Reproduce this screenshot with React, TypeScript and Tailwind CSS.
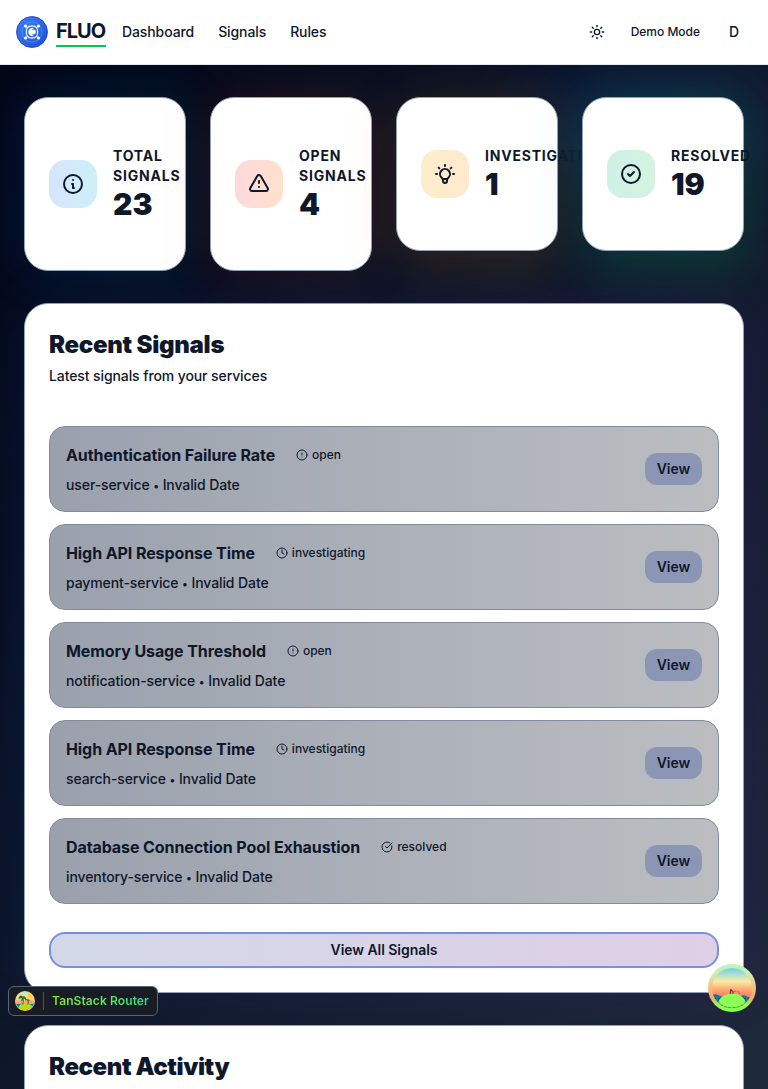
import React from "react";
import { CircleAlert, CircleCheckBig, Clock, Sun } from "lucide-react";

const stats = [
  {
    label: "Total Signals",
    value: 23,
    glow: "from-blue-600/15 to-cyan-600/15",
    tile: "from-[#d6e4ff] to-[#cdf0f7]",
    path: "M13 16h-1v-4h-1m1-4h.01M21 12a9 9 0 11-18 0 9 9 0 0118 0z",
  },
  {
    label: "Open Signals",
    value: 4,
    glow: "from-red-600/15 to-orange-600/15",
    tile: "from-[#fcd9dc] to-[#ffe1cd]",
    path: "M12 9v2m0 4h.01m-6.938 4h13.856c1.54 0 2.502-1.667 1.732-3L13.732 4c-.77-1.333-2.694-1.333-3.464 0L3.34 16c-.77 1.333.192 3 1.732 3z",
  },
  {
    label: "Investigating",
    value: 1,
    glow: "from-amber-600/15 to-yellow-600/15",
    tile: "from-[#fbeecb] to-[#ffe9cd]",
    path: "M9.663 17h4.673M12 3v1m6.364 1.636l-.707.707M21 12h-1M4 12H3m3.343-5.657l-.707-.707m2.828 9.9a5 5 0 117.072 0l-.548.547A3.374 3.374 0 0014 18.469V19a2 2 0 11-4 0v-.531c0-.895-.356-1.754-.988-2.386l-.548-.547z",
  },
  {
    label: "Resolved",
    value: 19,
    glow: "from-emerald-500/20 to-green-500/20",
    tile: "from-[#cff0e6] to-[#d3f4df]",
    path: "M9 12l2 2 4-4m6 2a9 9 0 11-18 0 9 9 0 0118 0z",
  },
];

const signals = [
  { name: "Authentication Failure Rate", service: "user-service", status: "open" },
  { name: "High API Response Time", service: "payment-service", status: "investigating" },
  { name: "Memory Usage Threshold", service: "notification-service", status: "open" },
  { name: "High API Response Time", service: "search-service", status: "investigating" },
  { name: "Database Connection Pool Exhaustion", service: "inventory-service", status: "resolved" },
];

const statusIcons = { open: CircleAlert, investigating: Clock, resolved: CircleCheckBig } as const;

function Logo() {
  return (
    <svg className="size-8" viewBox="0 0 32 32" fill="none">
      <defs>
        <linearGradient id="logo" x1="0" y1="0" x2="1" y2="1">
          <stop stopColor="#3b82f6" />
          <stop offset="1" stopColor="#1d4ed8" />
        </linearGradient>
      </defs>
      <circle cx="16" cy="16" r="15.5" fill="url(#logo)" stroke="#1e40af" strokeWidth=".8" />
      <circle cx="16" cy="16" r="10" stroke="#93c5fd" strokeWidth=".7" opacity=".5" />
      <circle cx="16" cy="16" r="5.8" stroke="#dbeafe" strokeWidth="1" opacity=".7" />
      <path d="M9.5 10 12 12M22.5 10 20 12M9.5 22 12 20M22.5 22 20 20M12 10.5q4-1.5 8 0M12 21.5q4 1.5 8 0M10.5 12.5v7M21.5 12.5v7" stroke="#e4eeff" strokeWidth="1.2" />
      <g fill="#fff">
        <circle cx="9.5" cy="10" r="1.6" />
        <circle cx="22.5" cy="10" r="1.6" />
        <circle cx="9.5" cy="22" r="1.6" />
        <circle cx="22.5" cy="22" r="1.6" />
        <path d="M17.5 11.8a4.300 4.300 0 1 0 0 8.400 6 6 0 0 1 0-8.400Z" />
        <circle cx="17.5" cy="16" r="2.4" />
      </g>
    </svg>
  );
}

function Island() {
  return (
    <svg className="size-5" viewBox="0 0 20 20">
      <defs>
        <linearGradient id="dusk" x1="0" y1="0" x2="0" y2="1">
          <stop stopColor="#a7e8df" />
          <stop offset=".3" stopColor="#fce38a" />
          <stop offset=".65" stopColor="#ff8a73" />
        </linearGradient>
        <clipPath id="disc"><circle cx="10" cy="10" r="9.2" /></clipPath>
      </defs>
      <circle cx="10" cy="10" r="10" fill="#fbd08a" />
      <g clipPath="url(#disc)">
        <rect width="20" height="20" fill="url(#dusk)" />
        <circle cx="15" cy="4.5" r="2.5" fill="#ffd02e" />
        <path d="M0 13h20v4H0z" fill="#07879a" />
        <ellipse cx="10.5" cy="16" rx="6.8" ry="3.6" fill="#b4dc12" />
        <path d="M7.8 6.5C8.8 9 8.4 11 7.8 13.5M13 9c.6 2 .3 3-.2 4.5" stroke="#6b3b20" strokeWidth=".8" fill="none" />
        <path d="M7.8 5.5C5.5 3.5 3.7 5 3.5 8c1.5-1 2.5-1 3.5-.5-.8 1-1 2-.5 3 1-.6 1.5-1.5 1.7-2.500 1.200-.2 2 .2 3 1.500.2-2.800-1.200-4.800-3.400-4Z" fill="#1d7a3b" />
        <path d="M13 8.5c-1.400-1-2.500-.4-2.800 1.200 1-.5 1.600-.4 2.400-.2-.2.8-.2 1.400.3 2 .4-.6.6-1.200.6-1.900.9 0 1.400.3 1.900 1.100.1-1.600-1-2.700-2.400-2.200Z" fill="#1d7a3b" />
      </g>
    </svg>
  );
}

function IslandLarge() {
  return (
    <svg className="size-12" viewBox="0 0 48 48">
      <defs>
        <linearGradient id="ring" x1="0" y1="0" x2="0" y2="1">
          <stop stopColor="#b5f5c4" />
          <stop offset=".25" stopColor="#d9e9a5" />
          <stop offset=".5" stopColor="#f4bd80" />
          <stop offset=".72" stopColor="#f5a878" />
          <stop offset=".86" stopColor="#9cf75c" />
          <stop offset="1" stopColor="#7dff4a" />
        </linearGradient>
        <linearGradient id="sky" x1="0" y1="0" x2="0" y2="1">
          <stop stopColor="#6bd0ef" />
          <stop offset=".33" stopColor="#f8eda6" />
          <stop offset=".5" stopColor="#ffb678" />
          <stop offset=".68" stopColor="#ff7f6c" />
        </linearGradient>
        <clipPath id="view"><circle cx="24" cy="24" r="20" /></clipPath>
      </defs>
      <circle cx="24" cy="24" r="24" fill="url(#ring)" />
      <g clipPath="url(#view)">
        <rect x="4" y="4" width="40" height="40" fill="url(#sky)" />
        <path d="M4 31q3-1.500 6 0t6 2h16q3-3 6-1t6 0v12H4z" fill="#087f8c" />
        <path d="M4 34.500h40" stroke="#0b5364" strokeWidth="1" strokeDasharray="4 2" />
        <ellipse cx="24" cy="41" rx="14" ry="11.5" fill="#8dff57" />
      </g>
      <path d="M10 37c4 9 24 9 28 0" stroke="#287d3a" strokeWidth=".7" strokeDasharray="3 1.2" fill="none" />
      <path d="M22 30c1-2 .5-3.5.7-5M23 26l2 1.500v2.500" stroke="#6b3a30" strokeWidth="1.2" fill="none" />
      <path d="M25.500 27.500l3-.5M30 27l1.500 3" stroke="#a9685a" strokeWidth="1" fill="none" />
    </svg>
  );
}

export default function App() {
  return (
    <div
      className="relative h-[1089px] w-full overflow-hidden bg-linear-to-br from-[#020617] via-[#0f172a] to-[#1e293b] text-slate-900"
      style={{ fontFamily: 'Inter, "Noto Sans", sans-serif' }}
    >
      <header className="relative z-10 flex h-[65px] items-center border-b border-slate-200 bg-white pr-[29px] pb-px pl-4 text-sm font-medium tracking-[-0.1px]">
        <Logo />
        <div className="ml-2 h-[31px] w-[50px] border-b-2 border-green-500 text-xl leading-[30px] font-bold tracking-[-1px]">FLUO</div>
        <nav className="ml-4 flex gap-6">
          <a>Dashboard</a>
          <a>Signals</a>
          <a>Rules</a>
        </nav>
        <div className="ml-auto flex items-center">
          <Sun className="size-4" />
          <span className="ml-[26px] text-xs tracking-[-0.02px]">Demo Mode</span>
          <span className="ml-[29px]">D</span>
        </div>
      </header>

      <main className="flex flex-col gap-8 px-6 pt-8">
        <section className="relative grid grid-cols-4 gap-6">
          <div className="absolute -top-4 -right-6 h-24 w-60 rounded-full bg-blue-600/15 blur-2xl" />
          {stats.map((s) => (
            <div key={s.label} className="relative">
              <div className={`absolute inset-0 rounded-3xl bg-linear-to-r blur-xl ${s.glow}`} />
              <div className="relative flex items-center gap-4 rounded-3xl border border-slate-400 bg-white px-6 py-12">
                <div className={`flex size-12 shrink-0 items-center justify-center rounded-2xl bg-linear-to-r ${s.tile}`}>
                  <svg className="size-6" viewBox="0 0 24 24" fill="none" stroke="currentColor" strokeWidth="2" strokeLinecap="round" strokeLinejoin="round">
                    <path d={s.path} />
                  </svg>
                </div>
                <div className="w-12">
                  <div className="text-sm font-bold tracking-[0.8px] uppercase">{s.label}</div>
                  <div className="text-3xl leading-9 font-black">{s.value}</div>
                </div>
              </div>
            </div>
          ))}
        </section>

        <section className="relative">
          <div className="absolute inset-0 rounded-3xl bg-linear-to-r from-blue-600/10 to-purple-600/10 blur-xl" />
          <div className="relative rounded-3xl border border-slate-400 bg-white p-6">
            <h2 className="pt-px text-2xl leading-8 font-black tracking-[-0.27px]">Recent Signals</h2>
            <p className="mt-[5px] text-sm font-medium tracking-[-0.1px]">Latest signals from your services</p>
            <ul className="mt-10 flex flex-col gap-3">
              {signals.map((s) => {
                const Icon = statusIcons[s.status as keyof typeof statusIcons];
                return (
                  <li key={s.service} className="flex items-center justify-between rounded-2xl border border-[#828b9a] bg-linear-to-r from-[#9aa1ac] via-[#abb0b9] to-[#bbbdc1] p-4">
                    <div>
                      <div className="flex items-center">
                        <h3 className="text-base leading-6 font-bold tracking-[-0.09px]">{s.name}</h3>
                        <span className="ml-[21px] flex items-center gap-1 text-xs font-medium">
                          <Icon className="size-3" />
                          {s.status}
                        </span>
                      </div>
                      <p className="mt-2 text-sm font-medium tracking-[-0.1px]">
                        {s.service} <span className="text-[11px]">•</span> Invalid Date
                      </p>
                    </div>
                    <button className="h-8 w-[57px] rounded-xl bg-[#8b96b4] text-sm font-semibold">View</button>
                  </li>
                );
              })}
            </ul>
            <button className="mt-7 h-9 w-full rounded-2xl border-2 border-[#7791df] bg-linear-to-r from-[#d2d8e7] to-[#dfcfe7] text-sm font-semibold tracking-[-0.05px]">
              View All Signals
            </button>
          </div>
        </section>

        <section className="relative h-40 rounded-3xl border border-slate-400 bg-white p-6">
          <h2 className="pt-px text-2xl leading-8 font-black tracking-[-0.4px]">Recent Activity</h2>
        </section>
      </main>

      <div className="absolute top-[986px] left-2 flex h-[30px] w-[150px] items-center rounded-md border border-[#586477] bg-[#191c24] pl-1.5">
        <Island />
        <div className="ml-2 h-[18px] w-px bg-[#475467]" />
        <span className="ml-2 bg-linear-to-r from-[#84f01e] to-[#10e58c] bg-clip-text text-xs font-semibold tracking-[0.1px] text-transparent">TanStack Router</span>
      </div>
      <div className="absolute top-[964px] left-[708px]">
        <IslandLarge />
      </div>
    </div>
  );
}
